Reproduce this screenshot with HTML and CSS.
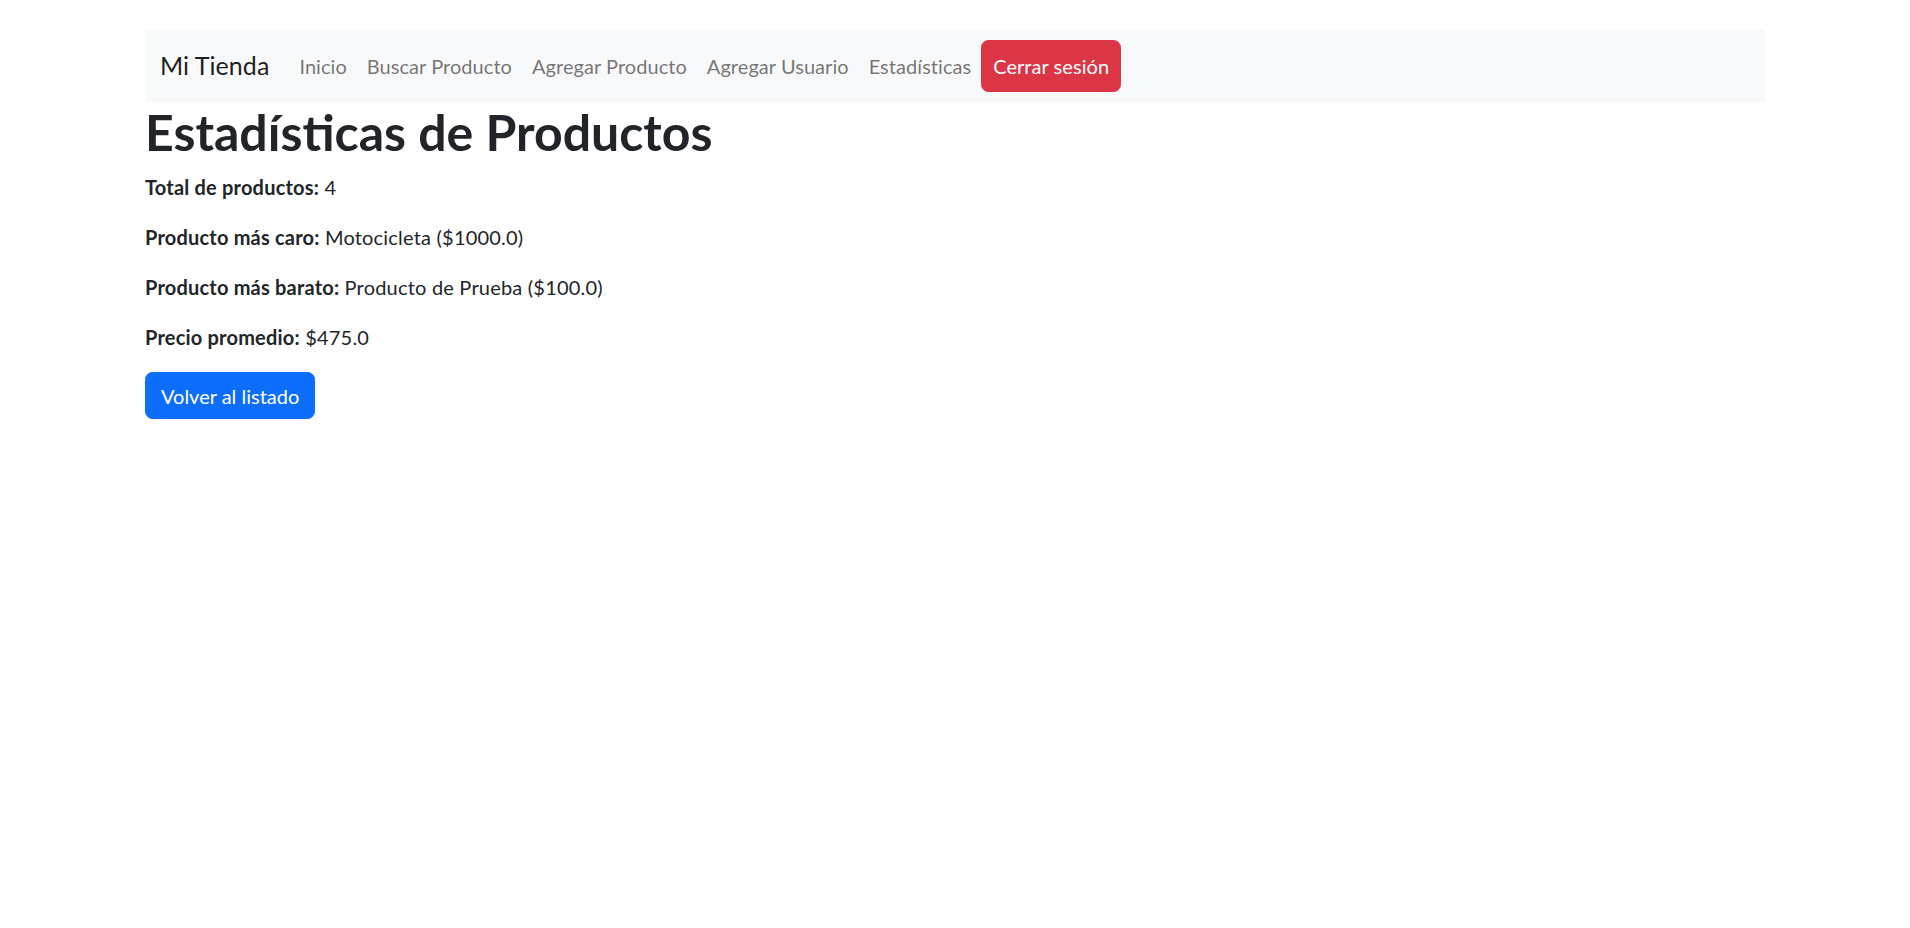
FILE: index.html
```html
<!DOCTYPE html>
<html lang="es">
<head>
<meta charset="utf-8">
<title>Estadísticas de Productos</title>
<link rel="stylesheet" href="styles.css">
</head>
<body>
<div class="container">
  <nav class="navbar">
    <div class="navbar-inner">
      <a class="brand" href="#">Mi Tienda</a>
      <ul class="nav">
        <li><a class="nav-link" href="#">Inicio</a></li>
        <li><a class="nav-link" href="#">Buscar Producto</a></li>
        <li><a class="nav-link" href="#">Agregar Producto</a></li>
        <li><a class="nav-link" href="#">Agregar Usuario</a></li>
        <li><a class="nav-link" href="#">Estadísticas</a></li>
        <li><a class="btn btn-danger" href="#">Cerrar sesión</a></li>
      </ul>
    </div>
  </nav>
  <h1 class="title">Estadísticas de Productos</h1>
  <p><strong>Total de productos:</strong> 4</p>
  <p><strong>Producto más caro:</strong> Motocicleta ($1000.0)</p>
  <p><strong>Producto más barato:</strong> Producto de Prueba ($100.0)</p>
  <p><strong>Precio promedio:</strong> $475.0</p>
  <a class="btn btn-primary" href="#">Volver al listado</a>
</div>
</body>
</html>
```
FILE: styles.css
```css
* { box-sizing: border-box; }
html, body { margin: 0; padding: 0; }
body {
  font-family: "Lato", "Open Sans", sans-serif;
  font-size: 20px;
  line-height: 1.5;
  color: #212529;
  background: #fff;
}
.container {
  width: 1650px;
  margin: 0 auto;
  padding: 0 15px;
}
.navbar {
  margin-top: 30px;
  background: #f8f9fa;
  padding: 10px 0;
  letter-spacing: 0.05px;
}
.navbar-inner {
  display: flex;
  align-items: center;
  padding: 0 15px;
}
.brand {
  font-size: 25px;
  line-height: 1.5;
  color: rgba(0,0,0,.9);
  text-decoration: none;
  margin-right: 20px;
  padding: 6px 0;
}
.nav {
  display: flex;
  align-items: center;
  list-style: none;
  margin: 0;
  padding: 0;
}
.nav-link {
  display: block;
  padding: 10px 10px;
  color: rgba(0,0,0,.55);
  text-decoration: none;
}
.btn {
  display: inline-block;
  padding: 10px 11px;
  font-size: 20px;
  line-height: 1.5;
  border-radius: 7.5px;
  text-decoration: none;
  color: #fff;
  border: 1px solid transparent;
}
.btn-danger { background: #dc3545; border-color: #dc3545; }
.btn-primary { background: #0d6efd; border-color: #0d6efd; padding: 7.5px 15px; }
.title {
  font-size: 50px;
  font-weight: 700;
  line-height: 1.2;
  margin: 0 0 10px;
}
p { margin: 0 0 20px; letter-spacing: 0.2px; }
strong { font-weight: 700; }
```
